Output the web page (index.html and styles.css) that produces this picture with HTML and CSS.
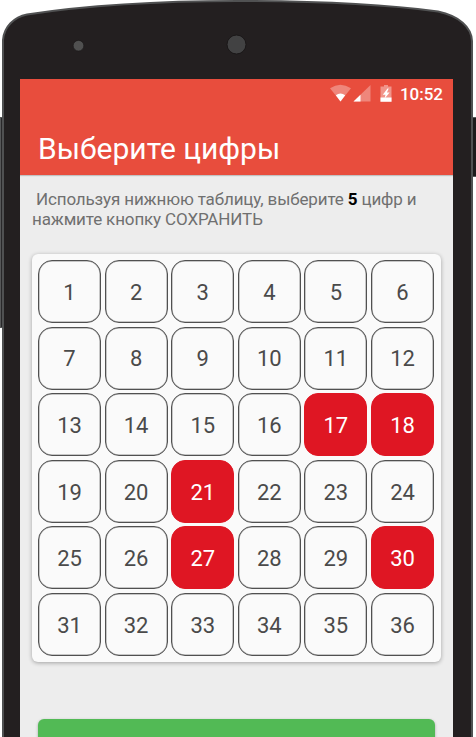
FILE: index.html
```html
<!DOCTYPE html>
<html lang="ru">
<head>
<meta charset="utf-8">
<title>Выберите цифры</title>
<link rel="stylesheet" href="styles.css">
</head>
<body>
<div class="phone">
  <svg class="shell" width="476" height="737" viewBox="0 0 476 737" aria-hidden="true">
    <rect x="0" y="117" width="3" height="211" fill="#29282a"/>
    <path d="M0 117.5H2M.5 117V328M0 327.5H2" stroke="#565758" fill="none"/>
    <rect x="472" y="117" width="4" height="59" fill="#1d1b1c"/>
    <path d="M473 117.5H476M473 176.5H476" stroke="#565758" fill="none"/>
    <path d="M3 738V40C4 27 14 17 27 14.5Q115 1 237.500 1Q360 1 438 11.500C459 16 471.500 27 472 41V738" fill="#231f20" stroke="#505152" stroke-width="2"/>
    <circle cx="78.500" cy="45.700" r="5.300" fill="#505050" stroke="#1a1718" stroke-width=".6"/>
    <circle cx="236.500" cy="44.500" r="9.500" fill="#424243" stroke="#1a1718"/>
  </svg>
  <main class="screen">
    <header class="appbar">
      <div class="status">
        <svg width="66" height="20" viewBox="0 0 66 20" aria-hidden="true">
          <path d="M0 4.200Q10.400-2.800 21 4.200L10.500 17.500Z" fill="#fff" opacity=".32"/>
          <path d="M5.800 11.300Q10.500 7.700 15.200 11.300L10.500 17.500Z" fill="#fff"/>
          <path d="M40.500 1V17.500H23.500Z" fill="#fff" opacity=".32"/>
          <path d="M30.500 10.800V17.500H23.500Z" fill="#fff"/>
          <path d="M50.500 2.600H54V1H58V2.600H61.500V17.700H50.500Z" fill="#fff" opacity=".4"/>
          <path d="M50.500 13.500H61.500V17.700H50.500Z" fill="#fff"/>
          <path d="M57.500 4.500L52.800 10.800H55.500L54.500 14.800L59.600 8.600H56.900L58.700 4.500Z" fill="#fff"/>
        </svg>
        <span class="clock">10:52</span>
      </div>
      <h1 class="title">Выберите цифры</h1>
    </header>
    <p class="hint"><span class="line first">Используя нижнюю таблицу, выберите <b>5</b> цифр и</span><span class="line second">нажмите кнопку СОХРАНИТЬ</span></p>
    <section class="card">
      <span class="cell">1</span><span class="cell">2</span><span class="cell">3</span><span class="cell">4</span><span class="cell">5</span><span class="cell">6</span>
      <span class="cell">7</span><span class="cell">8</span><span class="cell">9</span><span class="cell">10</span><span class="cell">11</span><span class="cell">12</span>
      <span class="cell">13</span><span class="cell">14</span><span class="cell">15</span><span class="cell">16</span><span class="cell on">17</span><span class="cell on">18</span>
      <span class="cell">19</span><span class="cell">20</span><span class="cell on">21</span><span class="cell">22</span><span class="cell">23</span><span class="cell">24</span>
      <span class="cell">25</span><span class="cell">26</span><span class="cell on">27</span><span class="cell">28</span><span class="cell">29</span><span class="cell on">30</span>
      <span class="cell">31</span><span class="cell">32</span><span class="cell">33</span><span class="cell">34</span><span class="cell">35</span><span class="cell">36</span>
    </section>
    <div class="save"></div>
  </main>
</div>
</body>
</html>
```
FILE: styles.css
```css
* { box-sizing: border-box; }
body { margin: 0; background: #fff; font-family: Roboto, sans-serif; overflow: hidden; }
.phone { position: relative; width: 476px; height: 737px; overflow: hidden; padding: 79px 23px 0 20px; }
.shell { position: absolute; left: 0; top: 0; }
.screen { position: relative; height: 658px; background: #ededed; overflow: hidden; }
.appbar { height: 96px; background: #e84d3d; color: #fff; box-shadow: 0 1px 1px rgba(0,0,0,.18); }
.status { display: flex; justify-content: flex-end; align-items: flex-start; gap: 4px; height: 51px; padding: 5px 10px 0 0; }
.clock { font-size: 17px; font-weight: 500; line-height: 20px; width: 43px; white-space: nowrap; letter-spacing: -.05px; }
.title { margin: 0; padding-left: 18px; font-size: 30px; font-weight: 400; line-height: 38px; white-space: nowrap; }
.hint { margin: 0; padding: 15px 0 0 12px; height: 79px; font-size: 17px; line-height: 19.500px; letter-spacing: -.14px; color: #707070; }
.line { display: block; white-space: nowrap; }
.first { padding-left: 4px; }
.hint b { color: #000; }
.card { width: 409px; height: 408px; margin-left: 12px; padding: 6px; border-radius: 6px; background: #fafafa; box-shadow: 0 1px 4px rgba(0,0,0,.32); display: grid; grid-template-columns: repeat(6, 63px); grid-auto-rows: 63px; gap: 3.600px; }
.cell { display: flex; align-items: center; justify-content: center; padding-top: 2.800px; border: 1px solid #505050; box-shadow: inset 0 0 0 .5px rgba(80,80,80,.6); border-radius: 14px; font-size: 22px; line-height: 26px; letter-spacing: -.1px; color: #4a4a4a; }
.on { background: #df1623; border-color: #df1623; box-shadow: none; color: #fff; }
.save { width: 397px; height: 60px; margin: 57px 0 0 18px; border-radius: 6px; background: #52ba55; box-shadow: 0 1px 3px rgba(0,0,0,.3); }
```
